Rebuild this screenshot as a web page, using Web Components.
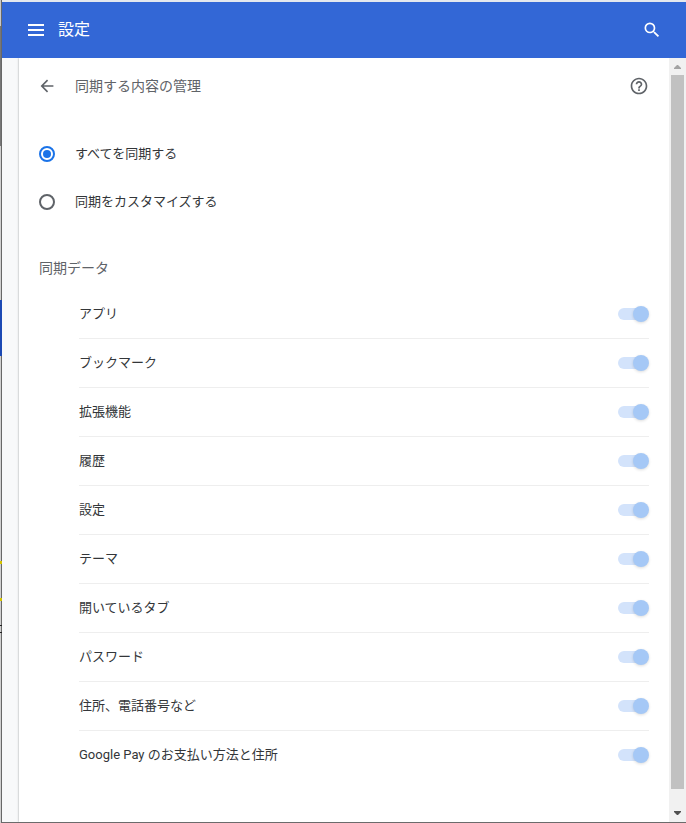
<!DOCTYPE html>
<html lang="ja">
<head>
<meta charset="utf-8">
<meta name="viewport" content="width=device-width, initial-scale=1">
<title>設定</title>
<style>
  html {
    overflow: hidden;
  }

  body {
    color: #333639;
    font-family: Roboto, "Noto Sans CJK JP", sans-serif;
    font-size: 13px;
    font-weight: 400;
    line-height: 20px;
    margin: 0;
  }
</style>
</head>
<body>
  <settings-window>
    <settings-toolbar slot="toolbar">設定</settings-toolbar>
    <settings-subpage heading="同期する内容の管理">
      <sync-mode></sync-mode>
      <sync-section heading="同期データ">
        <sync-toggle>アプリ</sync-toggle>
        <sync-toggle>ブックマーク</sync-toggle>
        <sync-toggle>拡張機能</sync-toggle>
        <sync-toggle>履歴</sync-toggle>
        <sync-toggle>設定</sync-toggle>
        <sync-toggle>テーマ</sync-toggle>
        <sync-toggle>開いているタブ</sync-toggle>
        <sync-toggle>パスワード</sync-toggle>
        <sync-toggle>住所、電話番号など</sync-toggle>
        <sync-toggle>Google Pay のお支払い方法と住所</sync-toggle>
      </sync-section>
    </settings-subpage>
    <scroll-track slot="scrollbar"></scroll-track>
  </settings-window>

<script>
class SettingsWindow extends HTMLElement {
  constructor() {
    super();
    const shadowRoot = this.attachShadow({ mode: "open" });
    shadowRoot.innerHTML = `
      <style>
        :host {
          box-sizing: border-box;
          display: grid;
          grid-template-columns: 2px minmax(0, 1fr);
          min-height: 100vh;
        }

        /* sliver of the window behind this one */
        .behind {
          background:
            linear-gradient(#686868, #686868) right / 1px 100% no-repeat,
            linear-gradient(#c8c8c8 26px, #777 26px 146px, #d0d0d0 146px);
          display: grid;
          grid-template-rows: 300px 56px 205px 3px 34px 3px 24px 1px 6px 1px 1fr;
        }

        .blue {
          background: #1c49b4;
          grid-row: 2;
        }

        .yellow {
          background: #d6c500;
        }

        .yellow:nth-child(2) {
          grid-row: 4;
        }

        .yellow:nth-child(3) {
          grid-row: 6;
        }

        .dark {
          background: #222;
          grid-row: 8;
        }

        .dark + .dark {
          grid-row: 10;
        }

        .window {
          border-bottom: 1px solid #6b6b6b;
          border-top: 2px solid #e4e8ee;
          display: flex;
          flex-direction: column;
        }

        .body {
          background: #f8f9fa;
          display: flex;
          flex: 1;
        }

        main {
          background: #fff;
          box-shadow: 0 0 2px rgba(60, 64, 67, 0.5);
          clip-path: inset(0 0 0 -4px);
          flex: 1;
          margin-left: 17px;
          min-width: 0;
        }
      </style>
      <div class="behind" aria-hidden="true">
        <div class="blue"></div>
        <div class="yellow"></div>
        <div class="yellow"></div>
        <div class="dark"></div>
        <div class="dark"></div>
      </div>
      <div class="window">
        <slot name="toolbar"></slot>
        <div class="body">
          <main><slot></slot></main>
          <slot name="scrollbar"></slot>
        </div>
      </div>
    `;
  }
}

class SettingsToolbar extends HTMLElement {
  constructor() {
    super();
    const shadowRoot = this.attachShadow({ mode: "open" });
    shadowRoot.innerHTML = `
      <style>
        :host {
          align-items: center;
          background: #3367d6;
          box-sizing: border-box;
          color: #fff;
          display: flex;
          height: 56px;
          padding: 0 22px;
        }

        h1 {
          flex: 1;
          font-size: 16px;
          font-weight: 400;
          line-height: 24px;
          margin: 0 0 0 10px;
        }

        button {
          background: none;
          border: 0;
          color: inherit;
          cursor: pointer;
          height: 24px;
          padding: 0;
          width: 24px;
        }

        svg {
          display: block;
          fill: currentColor;
        }

        .search {
          display: flex;
          align-items: center;
          justify-content: center;
        }
      </style>
      <button type="button" aria-label="メインメニュー">
        <svg width="24" height="24" viewBox="0 0 24 24"><path d="M4 6h16v2H4zM4 11h16v2H4zM4 16h16v2H4z"/></svg>
      </button>
      <h1><slot></slot></h1>
      <button type="button" class="search" aria-label="設定項目を検索">
        <svg width="20" height="20" viewBox="0 0 24 24"><path d="M15.5 14h-.79l-.28-.27A6.47 6.47 0 0 0 16 9.5 6.5 6.5 0 1 0 9.5 16c1.61 0 3.09-.59 4.23-1.57l.27.28v.79l5 4.99L20.49 19l-4.99-5zm-6 0C7.01 14 5 11.99 5 9.5S7.01 5 9.5 5 14 7.01 14 9.5 11.99 14 9.5 14z"/></svg>
      </button>
    `;
  }
}

class SettingsSubpage extends HTMLElement {
  constructor() {
    super();
    const shadowRoot = this.attachShadow({ mode: "open" });
    shadowRoot.innerHTML = `
      <style>
        :host {
          display: block;
          padding: 0 20px;
        }

        header {
          align-items: center;
          color: #5f6368;
          display: flex;
          height: 56px;
          margin-bottom: 16px;
        }

        h2 {
          flex: 1;
          font-size: 14px;
          font-weight: 400;
          margin: 0 0 0 20px;
        }

        button {
          background: none;
          border: 0;
          color: inherit;
          cursor: pointer;
          padding: 0;
        }

        svg {
          display: block;
          fill: currentColor;
        }
      </style>
      <header>
        <button type="button" aria-label="戻る">
          <svg width="16" height="16" viewBox="2 2 20 20"><path d="M20 11H7.83l5.59-5.59L12 4l-8 8 8 8 1.41-1.41L7.83 13H20v-2z"/></svg>
        </button>
        <h2></h2>
        <button type="button" aria-label="ヘルプ">
          <svg width="20" height="20" viewBox="0 0 24 24"><path d="M11 18h2v-2h-2v2zm1-16C6.48 2 2 6.48 2 12s4.48 10 10 10 10-4.48 10-10S17.52 2 12 2zm0 18c-4.41 0-8-3.59-8-8s3.59-8 8-8 8 3.59 8 8-3.59 8-8 8zm0-14c-2.21 0-4 1.79-4 4h2c0-1.1.9-2 2-2s2 .9 2 2c0 2-3 1.75-3 5h2c0-2.25 3-2.5 3-5 0-2.21-1.79-4-4-4z"/></svg>
        </button>
      </header>
      <slot></slot>
    `;
    shadowRoot.querySelector("h2").textContent = this.getAttribute("heading");
  }
}

class SyncMode extends HTMLElement {
  constructor() {
    super();
    const shadowRoot = this.attachShadow({ mode: "open" });
    shadowRoot.innerHTML = `
      <style>
        :host {
          display: block;
        }

        label {
          align-items: center;
          cursor: pointer;
          display: flex;
          gap: 20px;
          height: 48px;
        }

        input {
          appearance: none;
          border: 2px solid #5f6368;
          border-radius: 50%;
          box-sizing: border-box;
          display: grid;
          height: 16px;
          margin: 0;
          place-items: center;
          width: 16px;
        }

        input:checked {
          border-color: #1a73e8;
        }

        input:checked::before {
          background: #1a73e8;
          border-radius: 50%;
          content: "";
          height: 8px;
          width: 8px;
        }
      </style>
      <div role="radiogroup" aria-label="同期する内容の管理">
        <label><input type="radio" name="mode" value="all" checked><span>すべてを同期する</span></label>
        <label><input type="radio" name="mode" value="custom"><span>同期をカスタマイズする</span></label>
      </div>
    `;

    shadowRoot.addEventListener("change", this.switchMode.bind(this));
  }

  switchMode(e) {
    const locked = e.target.value === "all";
    document
      .querySelectorAll("sync-toggle")
      .forEach((toggle) => toggle.setLocked(locked));
  }
}

class SyncSection extends HTMLElement {
  constructor() {
    super();
    const shadowRoot = this.attachShadow({ mode: "open" });
    shadowRoot.innerHTML = `
      <style>
        :host {
          display: block;
          padding: 32px 0 43px;
        }

        h3 {
          color: #5f6368;
          font-size: 14px;
          font-weight: 400;
          margin: 0 0 12px;
        }

        .list {
          padding-left: 40px;
        }
      </style>
      <section>
        <h3></h3>
        <div class="list"><slot></slot></div>
      </section>
    `;
    shadowRoot.querySelector("h3").textContent = this.getAttribute("heading");
  }
}

class SyncToggle extends HTMLElement {
  constructor() {
    super();
    const shadowRoot = this.attachShadow({ mode: "open" });
    shadowRoot.innerHTML = `
      <style>
        :host {
          border-bottom: 1px solid #eee;
          display: block;
        }

        :host(:last-of-type) {
          border-bottom: 0;
        }

        label {
          align-items: center;
          display: flex;
          height: 48px;
          justify-content: space-between;
        }

        input {
          appearance: none;
          flex: none;
          height: 16px;
          margin: 0;
          position: relative;
          width: 31px;
        }

        input::before {
          background: #bdc1c6;
          border-radius: 6px;
          content: "";
          height: 12px;
          left: 0;
          position: absolute;
          top: 2px;
          width: 28px;
        }

        input::after {
          background: #fff;
          border-radius: 50%;
          box-shadow: 0 1px 3px rgba(0, 0, 0, 0.14);
          content: "";
          height: 16px;
          left: 0;
          position: absolute;
          top: 0;
          width: 16px;
        }

        input:checked::before {
          background: #8cb9f4;
        }

        input:checked::after {
          background: #1a73e8;
          left: auto;
          right: 0;
        }

        input:checked:disabled::before {
          background: #d3e3fb;
        }

        input:checked:disabled::after {
          background: #a5c8f6;
        }
      </style>
      <label><span><slot></slot></span><input type="checkbox" checked disabled></label>
    `;
  }

  setLocked(locked) {
    this.shadowRoot.querySelector("input").disabled = locked;
  }
}

class ScrollTrack extends HTMLElement {
  constructor() {
    super();
    const shadowRoot = this.attachShadow({ mode: "open" });
    shadowRoot.innerHTML = `
      <style>
        :host {
          background: #f1f1f1;
          box-sizing: border-box;
          display: flex;
          flex: none;
          flex-direction: column;
          padding: 0 2px;
          width: 17px;
        }

        svg {
          display: block;
          height: 17px;
          width: 13px;
        }

        .thumb {
          background: #c1c1c1;
          flex: 1;
          margin-bottom: 16px;
        }
      </style>
      <svg viewBox="0 0 13 17" fill="#a3a3a3" aria-hidden="true"><path d="M3 11v-1l3-3h1l3 3v1z"/></svg>
      <div class="thumb"></div>
      <svg viewBox="0 0 13 17" fill="#505050" aria-hidden="true"><path d="M3 6h7v1l-3 3H6L3 7z"/></svg>
    `;
  }
}

customElements.define("settings-window", SettingsWindow);
customElements.define("settings-toolbar", SettingsToolbar);
customElements.define("settings-subpage", SettingsSubpage);
customElements.define("sync-mode", SyncMode);
customElements.define("sync-section", SyncSection);
customElements.define("sync-toggle", SyncToggle);
customElements.define("scroll-track", ScrollTrack);
</script>
</body>
</html>
